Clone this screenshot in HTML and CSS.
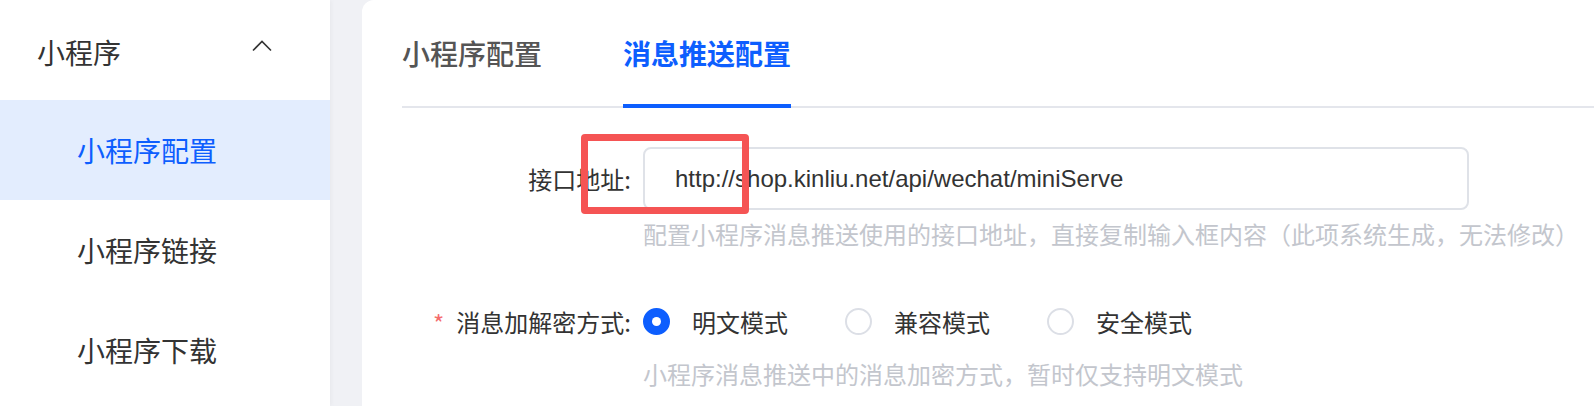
FILE: index.html
```html
<!DOCTYPE html>
<html lang="zh-CN">
<head>
<meta charset="utf-8">
<title>消息推送配置</title>
<link rel="stylesheet" href="styles.css">
</head>
<body>
<div class="layout">
  <aside class="sidebar">
    <div class="menu-title">
      <span>小程序</span>
      <svg class="chevron" width="20" height="12" viewBox="0 0 20 12"><path d="M1 10.5 L10 1.5 L19 10.5" fill="none" stroke="#333" stroke-width="1.6"/></svg>
    </div>
    <div class="menu-item active">小程序配置</div>
    <div class="menu-item">小程序链接</div>
    <div class="menu-item">小程序下载</div>
  </aside>
  <main class="card">
    <nav class="tabs">
      <div class="tab">小程序配置</div>
      <div class="tab active">消息推送配置</div>
    </nav>
    <form class="form">
      <div class="form-item">
        <label class="form-label">接口地址:</label>
        <div class="form-content">
          <div class="input-wrap">
            <div class="input">http://shop.kinliu.net/api/wechat/miniServe</div>
            <div class="highlight"></div>
          </div>
          <div class="hint">配置小程序消息推送使用的接口地址，直接复制输入框内容（此项系统生成，无法修改）</div>
        </div>
      </div>
      <div class="form-item radio-item">
        <label class="form-label"><span class="req">*</span>消息加解密方式:</label>
        <div class="form-content">
          <div class="radio-group">
            <span class="radio checked"><span class="dot"></span><span class="radio-label">明文模式</span></span>
            <span class="radio"><span class="dot"></span><span class="radio-label">兼容模式</span></span>
            <span class="radio"><span class="dot"></span><span class="radio-label">安全模式</span></span>
          </div>
          <div class="hint hint2">小程序消息推送中的消息加密方式，暂时仅支持明文模式</div>
        </div>
      </div>
    </form>
  </main>
</div>
</body>
</html>
```

FILE: styles.css
```css
* { box-sizing: border-box; }
html, body {
  margin: 0;
  padding: 0;
  height: 406px;
  overflow: hidden;
  background: #f0f1f5;
  font-family: "Noto Sans CJK SC", "Noto Sans", sans-serif;
  color: #333;
}
.layout {
  display: flex;
  gap: 32px;
  height: 406px;
}
.sidebar {
  width: 330px;
  flex: 0 0 330px;
  background: #fff;
  box-shadow: 2px 0 4px rgba(0, 0, 0, 0.03);
}
.menu-title {
  height: 100px;
  display: flex;
  align-items: center;
  justify-content: space-between;
  padding: 0 58px 0 37px;
  font-size: 28px;
  color: #333;
}
.menu-title span { position: relative; top: 2px; }
.chevron { position: relative; top: -4px; }
.menu-item {
  height: 100px;
  display: flex;
  align-items: center;
  padding-left: 77px;
  font-size: 28px;
  color: #333;
}
.menu-item.active {
  background: #e3edfe;
  color: #0d5efe;
}
.card {
  flex: 1;
  margin-right: -40px;
  background: #fff;
  border-radius: 12px 12px 0 0;
  padding: 0 40px;
}
.tabs {
  display: flex;
  gap: 81px;
  height: 108px;
  border-bottom: 2px solid #e4e6ec;
}
.tab {
  position: relative;
  height: 106px;
  display: flex;
  align-items: center;
  font-size: 28px;
  font-weight: 500;
  color: #555;
}
.tab.active {
  color: #0d5efe;
  font-weight: 700;
}
.tab.active::after {
  content: "";
  position: absolute;
  left: 0;
  right: 0;
  bottom: -2px;
  height: 4px;
  background: #0d5efe;
}
.form {
  padding-top: 39px;
}
.form-item {
  display: grid;
  grid-template-columns: 241px 1fr;
}
.form-label {
  height: 63px;
  display: flex;
  align-items: center;
  justify-content: flex-end;
  padding-right: 12px;
  font-size: 24px;
  color: #333;
}
.req {
  color: #f56c6c;
  margin-right: 12px;
  font-size: 24px;
  position: relative;
  top: 1px;
}
.input-wrap {
  position: relative;
  width: 826px;
}
.input {
  height: 63px;
  border: 2px solid #dfe2e8;
  border-radius: 8px;
  padding-left: 30px;
  display: flex;
  align-items: center;
  font-family: "Liberation Sans", Arial, sans-serif;
  font-size: 24px;
  color: #333;
}
.highlight {
  position: absolute;
  left: -62px;
  top: -13px;
  width: 168px;
  height: 80px;
  border: 7.5px solid #f55454;
  border-radius: 4px;
}
.hint {
  margin-top: 6px;
  font-size: 24px;
  line-height: 36px;
  color: #c3c6cd;
  white-space: nowrap;
}
.radio-item {
  margin-top: 49px;
}
.radio-item .form-label {
  height: 40px;
}
.radio-group {
  height: 40px;
  display: flex;
  align-items: center;
  gap: 57px;
}
.radio {
  display: flex;
  align-items: center;
  gap: 22px;
}
.dot {
  width: 27px;
  height: 27px;
  border-radius: 50%;
  border: 2px solid #dcdfe6;
  background: #fff;
  display: flex;
  align-items: center;
  justify-content: center;
}
.radio.checked .dot {
  border-color: #0d5efe;
  background: #0d5efe;
}
.radio.checked .dot::after {
  content: "";
  width: 9px;
  height: 9px;
  border-radius: 50%;
  background: #fff;
}
.radio-label {
  font-size: 24px;
  color: #333;
}
.hint2 {
  margin-top: 15px;
}
```
